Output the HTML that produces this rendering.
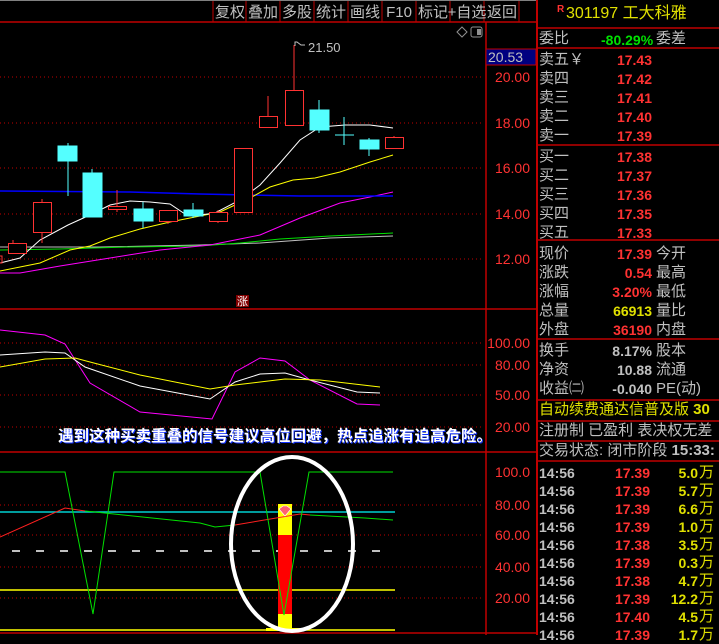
<!DOCTYPE html>
<html><head><meta charset="utf-8"><style>
body{margin:0;background:#000;width:719px;height:635px;overflow:hidden;position:relative;font-family:"Liberation Sans","Noto Sans CJK SC",sans-serif}
.t{position:absolute;white-space:nowrap;font-size:14px;line-height:16px}
.g{color:#c0c0c0}.r{color:#ff3232}.y{color:#e0e000}.gr{color:#00e000}
.b{font-weight:bold}
.v{position:absolute;text-align:right;width:80px;font-weight:bold;font-size:14px;line-height:16px}
</style></head><body>
<svg width="719" height="635" style="position:absolute;left:0;top:0" font-family="Liberation Sans, Noto Sans CJK SC, sans-serif">
<line x1="0" y1="0.5" x2="537" y2="0.5" stroke="#808080"/>
<line x1="0" y1="22" x2="537" y2="22" stroke="#c00000" stroke-width="1.5"/>
<g stroke="#c00000">
<line x1="213" y1="1" x2="213" y2="22"/><line x1="246" y1="1" x2="246" y2="22"/><line x1="280" y1="1" x2="280" y2="22"/><line x1="314" y1="1" x2="314" y2="22"/><line x1="348" y1="1" x2="348" y2="22"/><line x1="382" y1="1" x2="382" y2="22"/><line x1="416" y1="1" x2="416" y2="22"/><line x1="450" y1="1" x2="450" y2="22"/><line x1="484" y1="1" x2="484" y2="22"/><line x1="519" y1="1" x2="519" y2="22"/>
</g>
<g fill="#c0c0c0" font-size="15" text-anchor="middle">
<text x="230" y="17">复权</text><text x="263" y="17">叠加</text><text x="297" y="17">多股</text><text x="331" y="17">统计</text><text x="365" y="17">画线</text><text x="399" y="17">F10</text><text x="433" y="17">标记</text><text x="467" y="17">+自选</text><text x="502" y="17">返回</text>
</g>
<line x1="486" y1="22" x2="486" y2="635" stroke="#c00000" stroke-width="1.5"/>
<line x1="537" y1="0" x2="537" y2="635" stroke="#c00000" stroke-width="2"/>
<line x1="0" y1="309" x2="537" y2="309" stroke="#c00000" stroke-width="1.5"/>
<line x1="0" y1="452" x2="537" y2="452" stroke="#c00000" stroke-width="1.5"/>
<line x1="0" y1="633" x2="537" y2="633" stroke="#c00000" stroke-width="1.5"/>
<g stroke="#c00000" stroke-dasharray="1,3">
<line x1="0" y1="77" x2="484" y2="77"/><line x1="0" y1="123" x2="484" y2="123"/><line x1="0" y1="168" x2="484" y2="168"/><line x1="0" y1="214" x2="484" y2="214"/><line x1="0" y1="259" x2="484" y2="259"/>
<line x1="0" y1="343" x2="484" y2="343"/><line x1="0" y1="365" x2="484" y2="365"/><line x1="0" y1="395" x2="484" y2="395"/><line x1="0" y1="427" x2="484" y2="427"/>
<line x1="0" y1="505" x2="484" y2="505"/><line x1="0" y1="535" x2="484" y2="535"/><line x1="0" y1="567" x2="484" y2="567"/><line x1="0" y1="598" x2="484" y2="598"/>
</g>
<g fill="#ff3232" font-size="14" text-anchor="end">
<text x="530" y="82">20.00</text><text x="530" y="128">18.00</text><text x="530" y="173">16.00</text><text x="530" y="219">14.00</text><text x="530" y="264">12.00</text>
<text x="530" y="348">100.00</text><text x="530" y="370">80.00</text><text x="530" y="400">50.00</text><text x="530" y="432">20.00</text>
<text x="530" y="477">100.0</text><text x="530" y="510">80.00</text><text x="530" y="540">60.00</text><text x="530" y="572">40.00</text><text x="530" y="603">20.00</text>
</g>
<rect x="486" y="49" width="50" height="16" fill="#000080" stroke="#c00000"/>
<text x="488" y="62" fill="#c0c0c0" font-size="14">20.53</text>
<path d="M457 32 l5 -5 l5 5 l-5 5z" fill="none" stroke="#909090"/>
<rect x="471" y="27" width="11" height="10" rx="2" fill="none" stroke="#909090"/><rect x="477" y="29" width="4" height="6" fill="#909090"/>
<polyline fill="none" stroke="#c0c0c0" points="0,247 100,247 200,245 260,243 330,238 393,236"/>
<polyline fill="none" stroke="#00e000" points="0,250 60,249 130,247 200,246 240,243 280,239 330,236 393,233"/>
<polyline fill="none" stroke="#ff00ff" points="0,273 20,273 60,266 110,258 160,250 210,245 240,239 260,235 300,218 340,203 370,197 393,192"/>
<polyline fill="none" stroke="#0000ff" stroke-width="1.5" points="0,191 130,192 200,194 300,196 393,196"/>
<polyline fill="none" stroke="#ffff00" points="0,271 40,263 70,250 90,246 110,238 140,229 170,222 200,216 220,212 250,198 270,187 293,180 315,178 340,172 370,162 393,155"/>
<polyline fill="none" stroke="#ffffff" points="0,263 20,258 40,240 68,225 90,215 110,205 130,201 150,202 170,204 185,214 200,215 215,213 240,200 260,185 280,163 300,140 320,127 345,125 370,125 393,128"/>
<g stroke="#ff3232" fill="none">
<rect x="-1" y="256" width="3" height="7"/>
<line x1="13" y1="240" x2="13" y2="254"/><rect x="8.5" y="243.5" width="18" height="10" fill="#000"/>
<line x1="42" y1="199" x2="42" y2="243"/><rect x="33.5" y="202.5" width="18" height="30" fill="#000"/>
<line x1="117" y1="190" x2="117" y2="212"/><rect x="108.5" y="206.5" width="18" height="3" fill="#000"/>
<line x1="168" y1="221" x2="168" y2="224"/><rect x="159.5" y="210.5" width="18" height="11" fill="#000"/>
<line x1="218" y1="210" x2="218" y2="223"/><rect x="209.5" y="212.5" width="18" height="9" fill="#000"/>
<rect x="234.5" y="148.5" width="18" height="64" fill="#000"/>
<line x1="268" y1="96" x2="268" y2="116"/><rect x="259.5" y="116.5" width="18" height="11" fill="#000"/>
<line x1="294" y1="45" x2="294" y2="90"/><rect x="285.5" y="90.5" width="18" height="35" fill="#000"/>
<line x1="394" y1="136" x2="394" y2="138"/><rect x="385.5" y="137.5" width="18" height="11" fill="#000"/>
</g>
<g fill="#54ffff" stroke="#54ffff">
<line x1="68" y1="143" x2="68" y2="196"/><rect x="58" y="146" width="19" height="15"/>
<line x1="92" y1="169" x2="92" y2="217"/><rect x="83" y="173" width="19" height="44"/>
<line x1="143" y1="202" x2="143" y2="228"/><rect x="134" y="209" width="19" height="12"/>
<line x1="193" y1="203" x2="193" y2="218"/><rect x="184" y="210" width="19" height="6"/>
<line x1="319" y1="100" x2="319" y2="133"/><rect x="310" y="110" width="19" height="20"/>
<line x1="344" y1="117" x2="344" y2="145"/><line x1="335" y1="135" x2="354" y2="135"/>
<line x1="369" y1="138" x2="369" y2="156"/><rect x="360" y="140" width="19" height="9"/>
</g>
<path d="M295 46 v-4 h2 l4 3 h4" fill="none" stroke="#c0c0c0"/>
<text x="308" y="52" fill="#c0c0c0" font-size="13">21.50</text>
<rect x="236" y="295" width="13" height="12" fill="#800000"/><text x="242.5" y="305" fill="#fff" font-size="11" text-anchor="middle">涨</text>
<polyline fill="none" stroke="#ff00ff" points="0,330 45,335 65,344 90,383 140,412 212,419 235,372 260,358 285,361 310,380 357,404 380,405"/>
<polyline fill="none" stroke="#ffffff" points="0,355 45,352 65,353 85,367 140,386 210,399 235,382 260,374 285,373 310,380 357,392 380,393"/>
<polyline fill="none" stroke="#ffff00" points="0,367 45,359 75,358 90,362 140,375 210,389 235,385 285,379 320,380 380,387"/>
<text x="59" y="442" fill="#1030ff" font-size="15.5" font-weight="bold">遇到这种买卖重叠的信号建议高位回避，热点追涨有追高危险。</text>
<text x="58" y="441" fill="#ffffff" font-size="15.5" font-weight="bold">遇到这种买卖重叠的信号建议高位回避，热点追涨有追高危险。</text>
<line x1="0" y1="512" x2="395" y2="512" stroke="#00d0d0" stroke-width="1.5"/>
<line x1="12" y1="551" x2="390" y2="551" stroke="#fff" stroke-width="1.5" stroke-dasharray="8,16"/>
<line x1="0" y1="590" x2="395" y2="590" stroke="#ffff00" stroke-width="1.5"/>
<line x1="0" y1="630" x2="395" y2="630" stroke="#ffff00" stroke-width="1.5"/>
<rect x="278" y="504" width="14" height="126" fill="#ffff00"/>
<rect x="278" y="535" width="14" height="79" fill="#ff0000"/>
<rect x="266" y="628" width="36" height="3" fill="#ffff00"/>
<polyline fill="none" stroke="#ff2020" points="0,537 65,508 85,511"/>
<polyline fill="none" stroke="#00e000" points="85,511 95,512 200,523 215,527 235,525"/>
<polyline fill="none" stroke="#ff2020" points="235,525 300,514 310,515"/>
<polyline fill="none" stroke="#00e000" points="310,515 365,518 393,520"/>
<polyline fill="none" stroke="#00e000" points="0,472 65,472 93,614 114,472 260,472 284,615 309,472 393,472"/>
<path d="M279 509 l4 -3 h4 l4 3 l-6 7z" fill="#ff6070" stroke="#fff" stroke-width="0.6"/>
<ellipse cx="292" cy="544" rx="61" ry="87" fill="none" stroke="#fff" stroke-width="4"/>
<g stroke="#c00000" stroke-width="1.5">
<line x1="537" y1="28" x2="719" y2="28"/><line x1="537" y1="48" x2="719" y2="48"/><line x1="537" y1="145" x2="719" y2="145"/><line x1="537" y1="240" x2="719" y2="240"/><line x1="537" y1="339" x2="719" y2="339"/><line x1="537" y1="400" x2="719" y2="400"/><line x1="537" y1="421" x2="719" y2="421"/><line x1="537" y1="441" x2="719" y2="441"/><line x1="537" y1="461" x2="719" y2="461"/>
</g>
</svg>
<div class="t r b" style="left:557px;top:2px;font-size:10px">R</div>
<div class="t y" style="left:566px;top:6px;font-size:16px">301197 工大科雅</div>
<div class="t g" style="left:539px;top:31px;font-size:15px">委比</div><div class="t gr b" style="left:601px;top:32px">-80.29%</div><div class="t g" style="left:656px;top:31px;font-size:15px">委差</div>
<div class="t g" style="left:539px;top:50px;font-size:15px;line-height:19px">卖五￥<br>卖四<br>卖三<br>卖二<br>卖一</div>
<div class="v r" style="left:572px;top:51px;line-height:19px">17.43<br>17.42<br>17.41<br>17.40<br>17.39</div>
<div class="t g" style="left:539px;top:147px;font-size:15px;line-height:19px">买一<br>买二<br>买三<br>买四<br>买五</div>
<div class="v r" style="left:572px;top:148px;line-height:19px">17.38<br>17.37<br>17.36<br>17.35<br>17.33</div>
<div class="t g" style="left:539px;top:244px;font-size:15px;line-height:19px">现价<br>涨跌<br>涨幅<br>总量<br>外盘</div>
<div class="v" style="left:572px;top:245px;line-height:19px"><span class="r">17.39</span><br><span class="r">0.54</span><br><span class="r">3.20%</span><br><span class="y">66913</span><br><span class="r">36190</span></div>
<div class="t g" style="left:656px;top:244px;font-size:15px;line-height:19px">今开<br>最高<br>最低<br>量比<br>内盘</div>
<div class="t g" style="left:539px;top:341px;font-size:15px;line-height:19px">换手<br>净资<br>收益㈡</div>
<div class="v g" style="left:572px;top:342px;line-height:19px">8.17%<br>10.88<br>-0.040</div>
<div class="t g" style="left:656px;top:341px;font-size:15px;line-height:19px">股本<br>流通<br>PE(动)</div>
<div class="t y" style="left:539px;top:402px;font-size:15px">自动续费通达信普及版 <b>30</b></div>
<div class="t g" style="left:539px;top:423px;font-size:15px">注册制 已盈利 表决权无差</div>
<div class="t g" style="left:539px;top:443px;font-size:15px">交易状态: 闭市阶段 <b>15:33:</b></div>
<div class="t g b" style="left:539px;top:464px;line-height:18px">14:56<br>14:56<br>14:56<br>14:56<br>14:56<br>14:56<br>14:56<br>14:56<br>14:56<br>14:56</div>
<div class="v r" style="left:570px;top:464px;line-height:18px">17.39<br>17.39<br>17.39<br>17.39<br>17.38<br>17.39<br>17.38<br>17.39<br>17.40<br>17.39</div>
<div class="v y" style="left:618px;top:464px;line-height:18px;width:80px">5.0<br>5.7<br>6.6<br>1.0<br>3.5<br>0.3<br>4.7<br>12.2<br>4.5<br>1.7</div>
<div class="t y" style="left:699px;top:464px;line-height:18px;font-size:15px">万<br>万<br>万<br>万<br>万<br>万<br>万<br>万<br>万<br>万</div>
</body></html>
